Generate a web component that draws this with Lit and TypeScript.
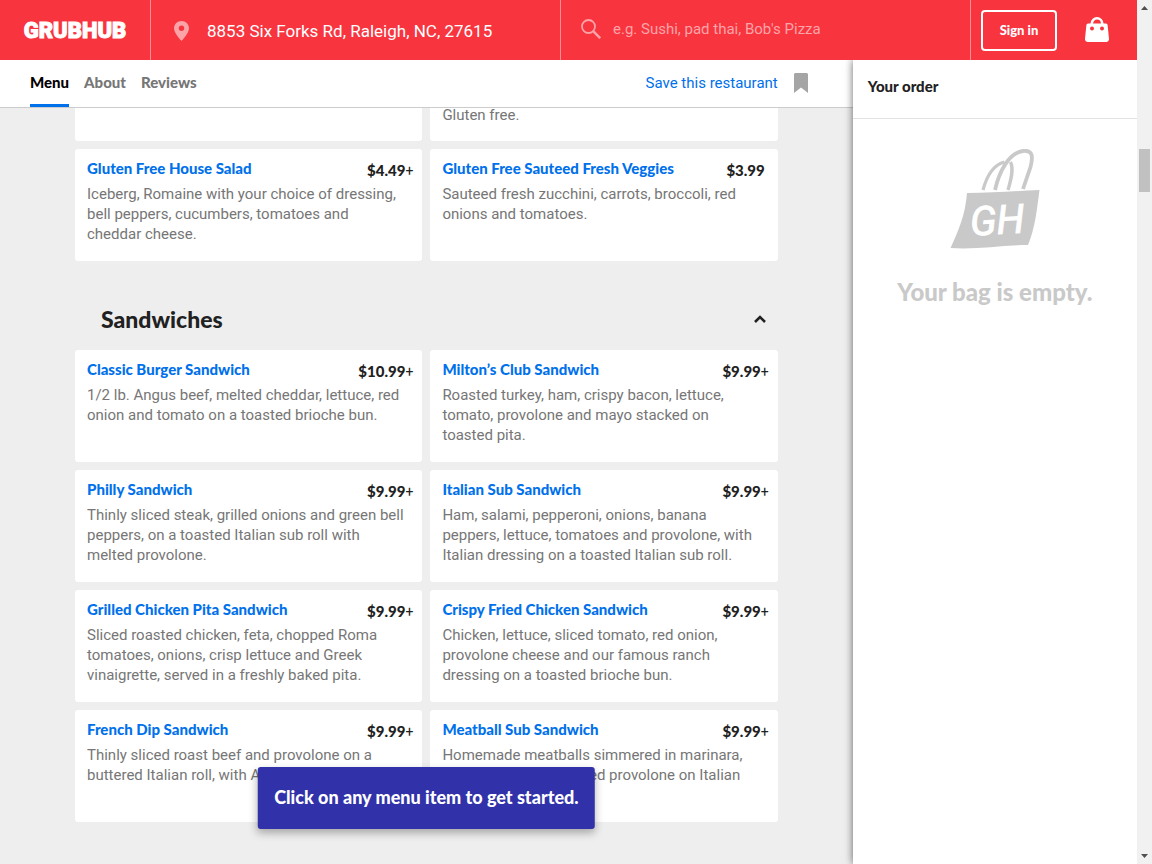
import { LitElement, html, css, svg, nothing } from "lit";
import { customElement, property } from "lit/decorators.js";

interface MenuItem {
  name: string;
  price: string;
  plus?: boolean;
  text: string;
}

const SIDES: MenuItem[] = [
  { name: "Gluten Free House Salad", price: "$4.49", plus: true, text: "Iceberg, Romaine with your choice of dressing, bell peppers, cucumbers, tomatoes and cheddar cheese." },
  { name: "Gluten Free Sauteed Fresh Veggies", price: "$3.99", text: "Sauteed fresh zucchini, carrots, broccoli, red onions and tomatoes." },
];

const SANDWICHES: MenuItem[] = [
  { name: "Classic Burger Sandwich", price: "$10.99", plus: true, text: "1/2 lb. Angus beef, melted cheddar, lettuce, red onion and tomato on a toasted brioche bun." },
  { name: "Milton’s Club Sandwich", price: "$9.99", plus: true, text: "Roasted turkey, ham, crispy bacon, lettuce, tomato, provolone and mayo stacked on toasted pita." },
  { name: "Philly Sandwich", price: "$9.99", plus: true, text: "Thinly sliced steak, grilled onions and green bell peppers, on a toasted Italian sub roll with melted provolone." },
  { name: "Italian Sub Sandwich", price: "$9.99", plus: true, text: "Ham, salami, pepperoni, onions, banana peppers, lettuce, tomatoes and provolone, with Italian dressing on a toasted Italian sub roll." },
  { name: "Grilled Chicken Pita Sandwich", price: "$9.99", plus: true, text: "Sliced roasted chicken, feta, chopped Roma tomatoes, onions, crisp lettuce and Greek vinaigrette, served in a freshly baked pita." },
  { name: "Crispy Fried Chicken Sandwich", price: "$9.99", plus: true, text: "Chicken, lettuce, sliced tomato, red onion, provolone cheese and our famous ranch dressing on a toasted brioche bun." },
  { name: "French Dip Sandwich", price: "$9.99", plus: true, text: "Thinly sliced roast beef and provolone on a buttered Italian roll, with Au jus." },
  { name: "Meatball Sub Sandwich", price: "$9.99", plus: true, text: "Homemade meatballs simmered in marinara, and covered with melted provolone on Italian" },
];

@customElement("menu-card")
class MenuCard extends LitElement {
  @property({ attribute: false }) item!: MenuItem;

  static styles = css`
    :host { display: block; background: #fff; border-radius: 3px; min-width: 0; }
    .card { padding: 9px 9px 17px 12px; min-height: 86px; }
    .head { display: flex; justify-content: space-between; align-items: flex-start; height: 20px; }
    .name { margin: 0; font: 900 15px/20px Lato, sans-serif; white-space: nowrap; }
    .name a { color: #0070eb; text-decoration: none; }
    .price { font: 900 15px/24px Lato, sans-serif; color: #212121; white-space: nowrap; }
    .price.flat { padding-right: 4px; }
    .plus { font-family: Roboto, sans-serif; font-weight: 400; font-size: 14px; }
    .text { margin: 6px 0 0; padding-right: 8px; font: 400 15px/20px Roboto, sans-serif; color: #767676; }
  `;

  render() {
    const { name, price, plus, text } = this.item;
    return html`<article class="card">
      <div class="head">
        <h3 class="name"><a href="#">${name}</a></h3>
        <span class="price ${plus ? "" : "flat"}">${price}${plus ? html`<span class="plus">+</span>` : nothing}</span>
      </div>
      <p class="text">${text}</p>
    </article>`;
  }
}

const pin = svg`<path fill-rule="evenodd" d="M7.500 0C3.300 0 0 3.200 0 7.300C0 12.500 7.500 20 7.500 20S15 12.500 15 7.300C15 3.200 11.700 0 7.500 0ZM7.500 4.500a2.700 2.700 0 1 1 0 5.400a2.700 2.700 0 0 1 0-5.400Z"/>`;

@customElement("app-root")
class AppRoot extends LitElement {
  static styles = css`
    :host { display: block; font-family: Roboto, sans-serif; color: #212121; }
    * { box-sizing: border-box; }
    a { text-decoration: none; }
    button { padding: 0; border: 0; background: none; cursor: pointer; }
    svg { display: block; flex: none; }
    .window { display: flex; height: 100vh; overflow: hidden; background: #eee; }
    .page { flex: 1; min-width: 0; display: flex; flex-direction: column; }

    .top { display: flex; height: 60px; flex: none; background: #f8343f; color: #fff; }
    .brand { flex: none; width: 151px; display: flex; align-items: center; justify-content: center; border-right: 1px solid #fb8f95; }
    .logo text { font: 900 22px Roboto, sans-serif; fill: #fff; stroke: #fff; stroke-width: 1; }
    .field { flex: 1 1 50%; min-width: 0; display: flex; align-items: center; border-right: 1px solid #fb8f95; }
    .place { padding: 2px 17px 0 23px; gap: 18px; }
    .place button { color: #fff; font: 400 17px/24px Roboto, sans-serif; }
    .find { padding: 0 20px 2px; gap: 12px; }
    .find input { flex: 1; min-width: 0; border: 0; padding: 0; outline: 0; background: none; color: #fff; font: 400 15px/24px Roboto, sans-serif; }
    .find input::placeholder { color: #fda4a9; opacity: 1; }
    .pale { fill: #fca3a8; }
    .account { flex: none; width: 166px; display: flex; align-items: center; gap: 28px; padding-left: 10px; }
    .signin { width: 76px; height: 41px; border: 2px solid #fff; border-radius: 4px; color: #fff; font: 900 13px/20px Lato, sans-serif; }
    .bag { padding-bottom: 2px; }

    .body { flex: 1; min-height: 0; display: flex; }
    .main { flex: 3; min-width: 0; display: flex; flex-direction: column; position: relative; }
    .tabs { flex: none; display: flex; justify-content: space-between; height: 48px; padding: 0 45px 0 30px; background: #fff; border-bottom: 1px solid #ccc; }
    .links { display: flex; gap: 15px; }
    .tab { padding-top: 12px; color: #767676; font: 900 15px/20px Lato, sans-serif; border-bottom: 3px solid transparent; }
    .tab.on { color: #000; border-bottom-color: #0070eb; }
    .save { display: flex; align-items: center; gap: 16px; padding-bottom: 2px; color: #0070eb; font: 400 15px/20px Roboto, sans-serif; }
    .menu { flex: 1; min-height: 0; overflow: hidden; padding: 0 75px; }
    .grid { display: grid; grid-template-columns: 1fr 1fr; gap: 8px; }
    .tails { margin-bottom: 8px; }
    .tail { height: 33px; margin: 0; padding: 0 12px; background: #fff; border-radius: 0 0 3px 3px; font: 400 15px/14px Roboto, sans-serif; color: #767676; }
    .section { display: flex; justify-content: space-between; align-items: center; padding: 43px 12px 16px 26px; }
    .section h2 { margin: 0; font: 900 23px/30px Lato, sans-serif; }
    .toast { position: absolute; left: 50%; bottom: 35px; transform: translateX(-50%); padding: 18px 16px 20px; border-radius: 3px; background: #3131aa; color: #fff; font: 900 18px/24px Lato, sans-serif; white-space: nowrap; box-shadow: 0 4px 8px rgba(0, 0, 0, 0.3); }

    .order { flex: 1; min-width: 0; background: #fff; box-shadow: 0 0 8px rgba(0, 0, 0, 0.6); clip-path: inset(0 0 0 -12px); display: flex; flex-direction: column; }
    .order h2 { margin: 0; padding: 16px 15px 22px; border-bottom: 1px solid #e1e1e1; font: 900 15px/20px Lato, sans-serif; }
    .empty { display: flex; flex-direction: column; align-items: center; gap: 27px; padding-top: 30px; }
    .empty p { margin: 0; font: 900 24px/32px Lato, sans-serif; color: #c9c9c9; }
    .letters { font: italic 400 40px Roboto, sans-serif; fill: #fff; stroke: #fff; stroke-width: 1; }

    .bar { flex: none; width: 15px; display: flex; flex-direction: column; align-items: center; justify-content: space-between; padding: 6px 0; background: #f1f1f1; }
    .thumb { width: 11px; height: 43px; margin: 139px 0 auto; background: #c1c1c1; }
  `;

  render() {
    return html`<div class="window">
      <div class="page">
        <header class="top">
          <a class="brand" href="#" aria-label="Grubhub">
            <svg class="logo" width="110" height="24" viewBox="0 0 110 24"><text x="55" y="20" text-anchor="middle">GRUBHUB</text></svg>
          </a>
          <div class="field place">
            <svg class="pale" width="15" height="20" viewBox="0 0 15 20">${pin}</svg>
            <button>8853 Six Forks Rd, Raleigh, NC, 27615</button>
          </div>
          <label class="field find">
            <svg width="20" height="20" viewBox="0 0 20 20" fill="none" stroke="#fca3a8"><circle cx="7.500" cy="7.500" r="6.500" stroke-width="1.800"/><path d="M12.200 12.200L19.200 19.200" stroke-width="2.400"/></svg>
            <input type="search" aria-label="Search" placeholder="e.g. Sushi, pad thai, Bob's Pizza" />
          </label>
          <div class="account">
            <button class="signin">Sign in</button>
            <button class="bag" aria-label="Bag">
              <svg width="24" height="25" viewBox="0 0 24 25"><path d="M6.800 8V6.500a5.200 5.200 0 0 1 10.400 0V8" fill="none" stroke="#fff" stroke-width="2.600"/><path fill="#fff" fill-rule="evenodd" d="M3 6.500H21Q22.400 6.500 22.600 8L24 21.800Q24.200 25 21.500 25H2.500Q-.2 25 0 21.800L1.400 8Q1.600 6.500 3 6.500ZM7 9.400a2 2 0 1 0 .01 4a2 2 0 1 0 0-4ZM17 9.400a2 2 0 1 0 .01 4a2 2 0 1 0 0-4Z"/></svg>
            </button>
          </div>
        </header>
        <div class="body">
          <main class="main">
            <nav class="tabs">
              <div class="links">
                <a class="tab on" href="#">Menu</a>
                <a class="tab" href="#">About</a>
                <a class="tab" href="#">Reviews</a>
              </div>
              <button class="save">Save this restaurant
                <svg width="14" height="20" viewBox="0 0 14 20"><path fill="#a5a5a5" d="M1 0H13L14 1V20L7 14.500L0 20V1Z"/></svg>
              </button>
            </nav>
            <div class="menu">
              <div class="grid tails">
                <p class="tail"></p>
                <p class="tail">Gluten free.</p>
              </div>
              <div class="grid">${SIDES.map((i) => html`<menu-card .item=${i}></menu-card>`)}</div>
              <div class="section">
                <h2>Sandwiches</h2>
                <button aria-label="Collapse">
                  <svg width="12" height="12" viewBox="0 0 12 12"><path d="M1 9L6 4L11 9" fill="none" stroke="#212121" stroke-width="2.600"/></svg>
                </button>
              </div>
              <div class="grid">${SANDWICHES.map((i) => html`<menu-card .item=${i}></menu-card>`)}</div>
            </div>
            <div class="toast" role="status">Click on any menu item to get started.</div>
          </main>
          <aside class="order">
            <h2>Your order</h2>
            <div class="empty">
              <svg width="90" height="100" viewBox="0 0 90 100">
                <g fill="none" stroke="#c9c9c9">
                  <path d="M33 41C37 26 43 16 54.500 13" stroke-width="3.200"/>
                  <path d="M45 41C49 23 59 3 74 1.800C83 1.500 83 8 80.500 18L73 40" stroke-width="3.800"/>
                  <path d="M60.500 13C64 20 61 31 58 41" stroke-width="3.400"/>
                </g>
                <path fill="#c9c9c9" d="M17 44C42 44 65 42 89.500 41C87 60 85 80 78 96C52 96 26 101 .5 99C9 80 15 67 17 44Z"/>
                <text class="letters" x="47" y="85" text-anchor="middle" transform="rotate(-3 47 70)">GH</text>
              </svg>
              <p>Your bag is empty.</p>
            </div>
          </aside>
        </div>
      </div>
      <div class="bar">
        <svg width="7" height="4" viewBox="0 0 7 4"><path fill="#505050" d="M0 4L3.500 0L7 4Z"/></svg>
        <div class="thumb"></div>
        <svg width="7" height="4" viewBox="0 0 7 4"><path fill="#505050" d="M0 0L3.500 4L7 0Z"/></svg>
      </div>
    </div>`;
  }
}
